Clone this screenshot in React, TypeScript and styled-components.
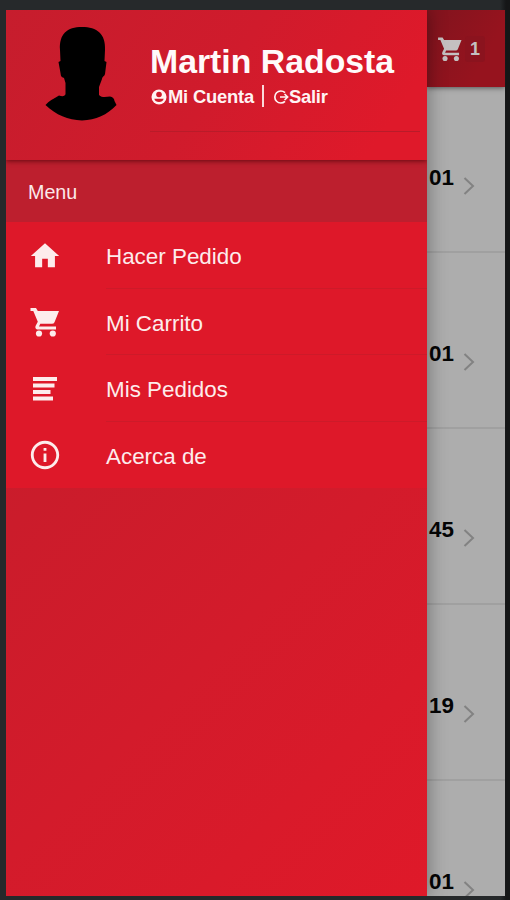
import React from 'react';
import styled, { createGlobalStyle } from 'styled-components';
import { MdHome, MdInfoOutline } from 'react-icons/md';

const GlobalStyle = createGlobalStyle`
  *, *::before, *::after { box-sizing: border-box; }
  body { margin: 0; background: #26282a; font-family: "Liberation Sans", Arial, sans-serif; }
`;

const Frame = styled.div`
  width: 510px;
  height: 900px;
  padding: 10px 5px 4px 6px;
  background: linear-gradient(90deg, #26292b 0 500px, #151617 506px);
  overflow: hidden;
`;

const Screen = styled.div`
  display: flex;
  height: 886px;
  overflow: hidden;
  background: #adadad;
`;

const Drawer = styled.aside`
  flex: none;
  display: flex;
  flex-direction: column;
  width: 421px;
  background: linear-gradient(135deg, #c41c2d 0%, #cb1c2b 40%, #d31b2b 65%, #df1929 100%);
  box-shadow: 0 0 18px rgba(0, 0, 0, 0.38);
  z-index: 1;
`;

const Profile = styled.header`
  display: flex;
  height: 150px;
  background: linear-gradient(125deg, #c61d2d 0%, #d01b2c 50%, #df192a 88%);
  box-shadow: 0 1px 5px rgba(70, 0, 5, 0.75);
  clip-path: inset(0 0 -10px 0);
  z-index: 1;
`;

const Avatar = styled.svg`
  flex: none;
  width: 72px;
  height: 95px;
  margin: 16px 33px 0 39px;
`;

const ProfileBody = styled.div`
  flex: 1;
  height: 122px;
  margin-right: 7px;
  padding-top: 31px;
  border-bottom: 1px solid #b91b29;
`;

const Name = styled.h1`
  margin: 0;
  font-size: 33.8px;
  line-height: 40px;
  font-weight: 700;
  color: #fffafa;
  white-space: nowrap;
`;

const Links = styled.div`
  display: flex;
  align-items: center;
  height: 28px;
  padding: 3px 0 0 1px;
  color: #fff3f3;
  font-size: 18.4px;
  font-weight: 700;
  letter-spacing: -0.22px;
`;

const ProfileLink = styled.a`
  display: flex;
  align-items: center;
  svg { flex: none; }
`;

const Divider = styled.span`
  width: 2px;
  height: 22px;
  margin: 0 9px 2px 8px;
  background: #fbd9da;
`;

const SectionTitle = styled.div`
  height: 62px;
  padding-left: 22px;
  background: #bd1f2e;
  color: #fbe9ea;
  font-size: 19.7px;
  line-height: 64px;
`;

const MenuList = styled.nav`
  height: 266px;
  background: #de1829;
`;

const MenuItem = styled.a`
  display: flex;
  align-items: center;
  height: 66.5px;
  padding-left: 22px;
  color: #fdecec;
  font-size: 22.4px;
  svg { flex: none; margin: 1px 45px 0 0; }
`;

const MenuLabel = styled.span`
  flex: 1;
  height: 66.5px;
  line-height: 69px;
  margin-left: -1px;
  border-bottom: 1px solid #cd1a29;
  ${MenuItem}:last-child & { border-bottom: 0; }
`;

const Page = styled.main`
  flex: 1;
  display: flex;
  flex-direction: column;
  min-width: 0;
`;

const TopBar = styled.div`
  flex: none;
  display: flex;
  align-items: center;
  height: 77px;
  padding-left: 9px;
  background: linear-gradient(120deg, #81141e, #96131e 70%);
  box-shadow: 0 1px 5px rgba(0, 0, 0, 0.5);
  color: #c4c0c0;
  z-index: 0;
`;

const CartCount = styled.span`
  width: 20px;
  height: 26px;
  margin-left: 1px;
  text-align: center;
  font-size: 18px;
  line-height: 26px;
  font-weight: 700;
  border-radius: 3px;
  background: #8b131e;
`;

const ProductRow = styled.div`
  flex: none;
  display: flex;
  height: 176px;
  padding: 88px 0 0 2px;
  border-bottom: 2px solid #a0a0a0;
  &:first-of-type { height: 166px; padding-top: 78px; }
`;

const Price = styled.span`
  width: 34px;
  font-size: 22.4px;
  line-height: 25px;
  font-weight: 700;
  color: #050505;
`;

const Chevron = styled.svg`
  width: 14px;
  height: 20px;
  margin-top: 11px;
`;

const ProductList = styled.section`
  flex: 1;
  min-height: 0;
  overflow: hidden;
`;

function CartIcon({ size }: { size: number }) {
  return (
    <svg width={size} height={size} viewBox="0 0 34 34" fill="currentColor">
      <path d="M2.500 3H8L9.800 6H31L26.500 17.300Q25.800 18.800 24 18.800H12.300L11 21.500H28V24.500H10.200C7.500 24.500 6.800 22.300 7.800 20.500L9.800 16.800 5.300 6H2.500Z" />
      <circle cx="11" cy="28.500" r="3.100" />
      <circle cx="24.800" cy="28.500" r="3.100" />
    </svg>
  );
}

function LinesIcon() {
  return (
    <svg width="34" height="34" viewBox="0 0 34 34" fill="currentColor">
      <path d="M5 5h24v4H5zM5 11.500h21.500v4H5zM5 18h17.500v4H5zM5 24.500h20v4H5z" />
    </svg>
  );
}

function AccountIcon() {
  return (
    <svg width="17" height="18" viewBox="0 0 17 18">
      <circle cx="8" cy="9" r="7.500" fill="currentColor" />
      <circle cx="8" cy="6.500" r="2.800" fill="#d01b2b" />
      <path d="M3.300 10.700H12.700Q11.700 14 8 14T3.300 10.700Z" fill="#d01b2b" />
    </svg>
  );
}

function ExitIcon() {
  return (
    <svg width="16" height="18" viewBox="0 0 16 18" fill="none" stroke="currentColor" strokeWidth="1.700">
      <path d="M12 4.700A6 6 0 1 0 12 13.300M7 9h8M11.600 6L14.600 9l-3 3" />
    </svg>
  );
}

const menu = [
  { label: 'Hacer Pedido', icon: <MdHome size={34} /> },
  { label: 'Mi Carrito', icon: <CartIcon size={34} /> },
  { label: 'Mis Pedidos', icon: <LinesIcon /> },
  { label: 'Acerca de', icon: <MdInfoOutline size={34} /> },
];

const prices = ['01', '01', '45', '19', '01'];

export default function App() {
  return (
    <>
      <GlobalStyle />
      <Frame>
        <Screen>
          <Drawer>
            <Profile>
              <Avatar viewBox="45 26 72 95">
                <path d="M60 50C59 34 67 27 82 27S106 34 105 50L104.500 61 106.500 62 105 74C104 77 102.500 76 102 79L99 87V95C102 98 106 97 110 96.500Q114 97 114.500 101L116.500 105C107 115 96 120 82 120.500C68 120 56 115 45.500 105C49 101 53 99 59 95.500C63 97 65 96 65.500 94V83L64 78C61 77 61 76 60.500 73L58.500 62 60.500 61Z" />
              </Avatar>
              <ProfileBody>
                <Name>Martin Radosta</Name>
                <Links>
                  <ProfileLink><AccountIcon />Mi Cuenta</ProfileLink>
                  <Divider />
                  <ProfileLink><ExitIcon />Salir</ProfileLink>
                </Links>
              </ProfileBody>
            </Profile>
            <SectionTitle>Menu</SectionTitle>
            <MenuList>
              {menu.map((item) => (
                <MenuItem key={item.label}>
                  {item.icon}
                  <MenuLabel>{item.label}</MenuLabel>
                </MenuItem>
              ))}
            </MenuList>
          </Drawer>
          <Page>
            <TopBar>
              <CartIcon size={28} />
              <CartCount>1</CartCount>
            </TopBar>
            <ProductList>
              {prices.map((price, index) => (
                <ProductRow key={index}>
                  <Price>{price}</Price>
                  <Chevron viewBox="0 0 14 20" fill="none" stroke="#828282" strokeWidth="2">
                    <path d="M1.500 2L10 10L1.500 18" />
                  </Chevron>
                </ProductRow>
              ))}
            </ProductList>
          </Page>
        </Screen>
      </Frame>
    </>
  );
}
